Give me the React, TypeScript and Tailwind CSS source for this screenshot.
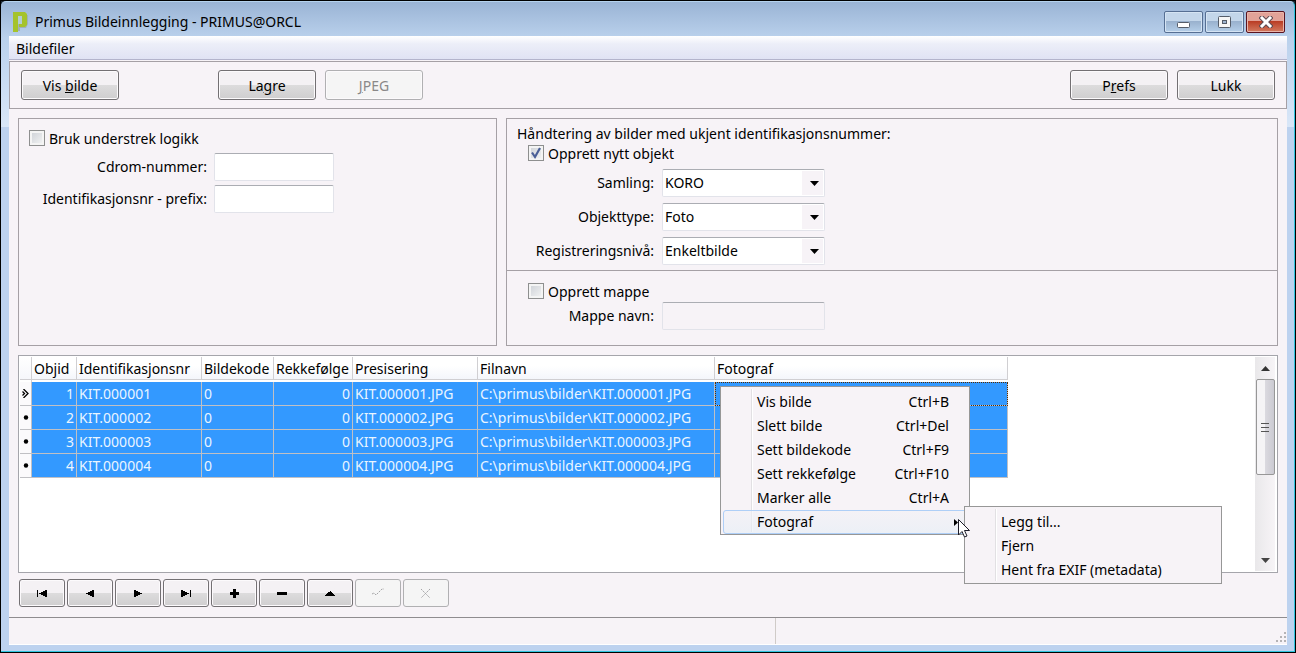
import { useId, type ReactNode } from 'react';

const rows = [1, 2, 3, 4].map((id) => ({
  id,
  ident: `KIT.00000${id}`,
  kode: 0,
  orden: 0,
  fil: `KIT.00000${id}.JPG`,
}));

const columns = [
  { label: 'Objid', width: 'w-[45px]' },
  { label: 'Identifikasjonsnr', width: 'w-[125px]' },
  { label: 'Bildekode', width: 'w-[72px]' },
  { label: 'Rekkefølge', width: 'w-[79px]' },
  { label: 'Presisering', width: 'w-[125px]' },
  { label: 'Filnavn', width: 'w-[237px]' },
  { label: 'Fotograf', width: 'w-[293px]' },
];

const menuItems = [
  { label: 'Vis bilde', keys: 'Ctrl+B' },
  { label: 'Slett bilde', keys: 'Ctrl+Del' },
  { label: 'Sett bildekode', keys: 'Ctrl+F9' },
  { label: 'Sett rekkefølge', keys: 'Ctrl+F10' },
  { label: 'Marker alle', keys: 'Ctrl+A' },
];

const subItems = ['Legg til...', 'Fjern', 'Hent fra EXIF (metadata)'];

const navButtons = [
  { label: 'Første', path: 'M1 1h1v7H1zM11 1v7H9V7H7V6H5V5H3V4h2V3h2V2h2V1z' },
  { label: 'Forrige', path: 'M10 1v7H8V7H6V6H4V5H2V4h2V3h2V2h2V1z' },
  { label: 'Neste', path: 'M2 1v7h2V7h2V6h2V5h2V4H8V3H6V2H4V1z' },
  { label: 'Siste', path: 'M1 1v7h2V7h2V6h2V5h2V4H7V3H5V2H3V1zM10 1h1v7h-1z' },
  { label: 'Ny', path: 'M5 0h3v3h3v3H8v3H5V6H2V3h3z' },
  { label: 'Slett', path: 'M1 3h10v3H1z' },
  { label: 'Rediger', path: 'M6 2h1v1h1v1h1v1h1v1h1v1H1V6h1V5h1V4h1V3h2z' },
];

function Button({ children, disabled = false }: { children: ReactNode; disabled?: boolean }) {
  return (
    <button
      disabled={disabled}
      className="h-[30px] w-[98px] rounded-[3px] border border-[#737073] bg-linear-to-b from-[#f4f1f4] from-50% via-[#dddcdd] via-50% to-[#cfcecf] pt-[2px] shadow-[inset_0_0_0_1px_#fcfafc] disabled:border-[#b0b0b2] disabled:bg-none disabled:bg-[#f5f5f5] disabled:text-[#8a8888]"
    >
      {children}
    </button>
  );
}

function Checkbox({ label, checked = false }: { label: string; checked?: boolean }) {
  return (
    <label className="flex h-5 gap-1">
      <span className="relative mt-px block size-4">
        <input
          type="checkbox"
          defaultChecked={checked}
          className="peer block size-4 appearance-none border border-[#8e8f8f] bg-linear-to-br from-[#cbcfd5] to-[#f6f6f6] shadow-[inset_0_0_0_2px_#f4f4f4]"
        />
        <svg viewBox="0 0 16 16" className="pointer-events-none absolute inset-0 hidden size-4 peer-checked:block">
          <path d="M4 7.500l3 4.500 5-9" fill="none" stroke="#4a5f97" strokeWidth="2.200" />
        </svg>
      </span>
      {label}
    </label>
  );
}

function TextField({ label, wide = false, disabled = false }: { label: string; wide?: boolean; disabled?: boolean }) {
  const id = useId();
  return (
    <div className={`flex h-7 items-center ${wide ? 'gap-2' : 'gap-[7px]'}`}>
      <label htmlFor={id} className={wide ? 'w-[137px] text-right' : 'w-[178px] text-right'}>{label}</label>
      <input
        id={id}
        disabled={disabled}
        className={`${wide ? 'w-[163px]' : 'w-[120px]'} h-7 rounded-xs border border-[#e2e3ea] border-t-[#abadb3] bg-white px-1 disabled:bg-[#f7f3f7]`}
      />
    </div>
  );
}

function SelectField({ label, value }: { label: string; value: string }) {
  const id = useId();
  return (
    <div className="flex h-7 items-center gap-2">
      <label htmlFor={id} className="w-[137px] text-right">{label}</label>
      <div className="relative">
        <select
          id={id}
          defaultValue={value}
          className="block h-7 w-[163px] appearance-none rounded-xs border border-[#e2e3ea] border-t-[#abadb3] bg-white pl-[2px]"
        >
          <option>{value}</option>
        </select>
        <span className="pointer-events-none absolute inset-y-[2px] right-[2px] flex w-[21px] items-center justify-end bg-[#f7f3f7] pr-1">
          <svg viewBox="0 0 9 5" className="h-[5px] w-[9px]">
            <path d="M0 0h9L4.500 5z" />
          </svg>
        </span>
      </div>
    </div>
  );
}

function TitleBar() {
  return (
    <header className="flex h-[34px] items-start justify-between pr-[2px] pl-1">
      <div className="flex h-full items-center gap-[7px] pt-[6px]">
        <svg viewBox="0 0 15 20" className="h-5 w-[15px]">
          <path d="M6 3h9v9l-2 4H7v3H3z" fill="#9fb0b8" />
          <path d="M0 0h12l2 2v11l-2 2H6v-3h3V4H5v16H0z" fill="#a5c32b" />
          <path d="M5 4h4v8H5z" fill="#b4cdd0" />
        </svg>
        <h1>Primus Bildeinnlegging - PRIMUS@ORCL</h1>
      </div>
      <div className="mt-[9px] flex gap-[2px]">
        <button aria-label="Minimer" className="flex h-[22px] w-[39px] items-center justify-center rounded-xs border border-[#566f93] bg-linear-to-b from-[#c3d6ea] from-45% via-[#98b0cd] via-45% to-[#b5cfe9] shadow-[inset_0_0_0_1px_#d5e4f3]">
          <svg viewBox="0 0 13 14" className="h-3.5 w-[13px]">
            <rect x=".5" y="7.500" width="12" height="5" rx="1" fill="#fff" stroke="#555d69" />
          </svg>
        </button>
        <button aria-label="Maksimer" className="flex h-[22px] w-[39px] items-center justify-center rounded-xs border border-[#566f93] bg-linear-to-b from-[#c3d6ea] from-45% via-[#98b0cd] via-45% to-[#b5cfe9] shadow-[inset_0_0_0_1px_#d5e4f3]">
          <svg viewBox="0 0 13 12" className="h-3 w-[13px]">
            <rect x=".5" y=".5" width="12" height="11" rx="1" fill="#f6f6f6" stroke="#555d69" />
            <rect x="4.500" y="4.500" width="4" height="3" fill="#9db4d0" stroke="#555d69" />
          </svg>
        </button>
        <button aria-label="Lukk vindu" className="flex h-[22px] w-[39px] items-center justify-center rounded-xs border border-[#5a1420] bg-linear-to-b from-[#e2a298] from-45% via-[#b93a22] via-45% to-[#d27a60] shadow-[inset_0_0_0_1px_#e9b5aa]">
          <svg viewBox="0 0 14 12" className="h-3 w-3.5">
            <path d="M3 2l8 8M11 2l-8 8" stroke="#5b4a52" strokeWidth="5" strokeLinecap="square" />
            <path d="M3 2l8 8M11 2l-8 8" stroke="#fff" strokeWidth="3" strokeLinecap="square" />
          </svg>
        </button>
      </div>
    </header>
  );
}

function ContextMenu() {
  return (
    <div role="menu" className="absolute top-1 left-[5px] z-10 w-[250px] border border-[#979797] bg-[#f7f3f7] px-[2px] pt-[3px] text-left text-black">
      <span className="pointer-events-none absolute inset-y-[2px] left-[30px] w-[2px] border-l border-[#e2e0e3] bg-white" />
      {menuItems.map((item) => (
        <button key={item.label} role="menuitem" className="relative flex h-6 w-full items-center justify-between pr-[18px] pl-[34px]">
          <span>{item.label}</span>
          <span>{item.keys}</span>
        </button>
      ))}
      <div className="relative">
        <button role="menuitem" aria-haspopup="menu" className="flex h-6 w-full items-center justify-between rounded-[3px] border border-[#aecff7] bg-linear-to-b from-[#f2f1f6]/60 to-[#e5eef6]/60 pr-2 pl-[33px]">
          Fotograf
          <svg viewBox="0 0 4 7" className="h-[7px] w-1">
            <path d="M0 0l4 3.500L0 7z" />
          </svg>
        </button>
        <div role="menu" className="absolute -top-1 left-[241px] w-[258px] border border-[#979797] bg-[#f7f3f7] px-[2px] pt-[3px] pb-px">
          <span className="pointer-events-none absolute inset-y-[2px] left-[30px] w-[2px] border-l border-[#e2e0e3] bg-white" />
          {subItems.map((label) => (
            <button key={label} role="menuitem" className="relative flex h-6 w-full items-center pl-[34px]">{label}</button>
          ))}
        </div>
        <svg viewBox="0 0 12 19" className="pointer-events-none absolute top-[9px] left-[235px] h-[19px] w-3">
          <path d="M.5.5v15.500l3.500-3.500 2.500 5.500 2.500-1-2.500-5.500h5z" fill="#fff" stroke="#1c1c28" />
        </svg>
      </div>
    </div>
  );
}

function ImageTable() {
  return (
    <table className="w-[988px] shrink-0 table-fixed border-separate border-spacing-0 self-start">
      <thead>
        <tr>
          <th aria-label="Markør" className="h-[23px] w-3 border-r border-b border-[#d0cfd2] bg-linear-to-b from-white to-[#f6f7fb]" />
          {columns.map((col) => (
            <th key={col.label} className={`${col.width} h-[23px] border-r border-b border-[#d0cfd2] bg-linear-to-b from-white from-40% to-[#f4f6fb] px-[2px] pt-[2px] text-left font-normal whitespace-nowrap`}>
              {col.label}
            </th>
          ))}
        </tr>
        <tr aria-hidden="true"><td className="h-[2px] border-r border-[#d0cfd2]" /></tr>
      </thead>
      <tbody className="text-[#eaf5ff]">
        {rows.map((row, i) => (
          <tr key={row.id} className="[&>td]:h-6 [&>td]:border-r [&>td]:border-b [&>td]:border-[#c0c0c4] [&>td]:px-[2px]">
            <td className="bg-[#fbfafc]">
              <svg viewBox="0 0 7 9" className="h-[9px] w-[7px]">
                {i === 0 ? <path d="M1.500 0l4.500 4.500L1.500 9M.5 2.500L2.500 4.500L.5 6.500" fill="none" stroke="#000" strokeWidth="1.300" /> : <circle cx="4" cy="4.500" r="2.200" />}
              </svg>
            </td>
            <td className="bg-[#3399ff] text-right">{row.id}</td>
            <td className="bg-[#3399ff]">{row.ident}</td>
            <td className="bg-[#3399ff]">{row.kode}</td>
            <td className="bg-[#3399ff] text-right">{row.orden}</td>
            <td className="bg-[#3399ff]">{row.fil}</td>
            <td className="bg-[#3399ff]">C:\primus\bilder\{row.fil}</td>
            <td className={i === 0 ? 'relative bg-[#3399ff] outline-1 -outline-offset-1 outline-dotted outline-[#5a2d00]' : 'bg-[#3399ff]'}>
              {i === 0 && <ContextMenu />}
            </td>
          </tr>
        ))}
      </tbody>
    </table>
  );
}

function ScrollBar() {
  return (
    <div className="mr-px flex w-5 flex-col items-center bg-linear-to-r from-[#e9e8ea] to-[#f7f4f7]">
      <button aria-label="Rull opp" className="flex h-[22px] w-full items-center justify-center">
        <svg viewBox="0 0 9 5" className="h-[5px] w-[9px]"><path d="M0 5h9L4.500 0z" fill="#333" /></svg>
      </button>
      <div className="flex h-24 w-[19px] flex-col items-center justify-center gap-[3px] rounded-xs border border-[#979797] bg-linear-to-r from-[#f5f4f6] from-45% via-[#dad9df] via-50% to-[#cbcad2]">
        <span className="h-px w-2 bg-[#555]" />
        <span className="h-px w-2 bg-[#555]" />
        <span className="h-px w-2 bg-[#555]" />
      </div>
      <button aria-label="Rull ned" className="mt-auto flex h-[22px] w-full items-center justify-center">
        <svg viewBox="0 0 9 5" className="h-[5px] w-[9px]"><path d="M0 0h9L4.500 5z" fill="#444" /></svg>
      </button>
    </div>
  );
}

function Navigator() {
  const base = 'flex h-7 w-[46px] items-center justify-center rounded-[3px] border';
  return (
    <div className="flex gap-[2px] pt-[6px] pl-px">
      {navButtons.map((b) => (
        <button key={b.label} aria-label={b.label} className={`${base} border-[#737073] bg-linear-to-b from-[#f4f1f4] from-50% via-[#dddcdd] via-50% to-[#cfcecf] shadow-[inset_0_0_0_1px_#fcfafc]`}>
          <svg viewBox="0 0 12 9" className="h-[9px] w-3"><path d={b.path} /></svg>
        </button>
      ))}
      <button disabled aria-label="Lagre post" className={`${base} border-[#b0b0b2] bg-[#f5f5f5]`}>
        <svg viewBox="0 0 14 10" className="h-2.5 w-3.5"><path d="M1 6l2-1 2 2 6-6h2" fill="none" stroke="#a5a5a7" strokeDasharray="2 1" /></svg>
      </button>
      <button disabled aria-label="Avbryt" className={`${base} border-[#b0b0b2] bg-[#f5f5f5]`}>
        <svg viewBox="0 0 12 11" className="h-[11px] w-3"><path d="M1 1l9 9M10 1l-9 9" fill="none" stroke="#a5a5a7" strokeDasharray="2 1" /></svg>
      </button>
    </div>
  );
}

export default function App() {
  return (
    <div className="flex min-h-screen flex-col border border-black bg-[#1d2733] font-['Noto_Sans',sans-serif] text-sm leading-5 text-black">
      <div className="flex grow flex-col rounded-t-[5px] border-t border-r border-b border-t-[#b5d3ee] border-r-[#2fc4de] border-b-[#2fc4de] bg-[linear-gradient(#9ab4d5,#bad1ec_36px,#d9e7f8_125px,#bdd2ef_125px)] px-2 pr-[7px] pb-[6px]">
        <TitleBar />
        <div className="flex grow flex-col border-b border-white bg-[#f7f3f7]">
          <nav className="flex h-6 items-center border-b border-[#b3b4cc] bg-linear-to-b from-white via-[#eceef8] via-35% to-[#e0e3f4] px-[7px] pt-[2px]">
            <button>Bildefiler</button>
          </nav>
          <div className="mt-px flex h-12 items-center border border-[#a5a0a5] px-[11px]">
            <Button>Vis <u>b</u>ilde</Button>
            <div className="ml-[99px] flex gap-[9px]">
              <Button>La<u>g</u>re</Button>
              <Button disabled><u>J</u>PEG</Button>
            </div>
            <div className="ml-auto flex gap-[9px]">
              <Button>P<u>r</u>efs</Button>
              <Button>Lukk</Button>
            </div>
          </div>

          <main className="flex grow flex-col px-[9px] pt-[9px] pb-[10px]">
            <div className="flex gap-[9px]">
              <section className="flex w-[479px] shrink-0 flex-col gap-1 border border-[#a5a0a5] px-[10px] pt-[10px]">
                <Checkbox label="Bruk understrek logikk" />
                <TextField label="Cdrom-nummer:" />
                <TextField label="Identifikasjonsnr - prefix:" />
              </section>
              <section className="grow border border-[#a5a0a5]">
                <div className="h-[152px] border-b border-[#a5a0a5] px-[10px] pt-[5px]">
                  <h2>Håndtering av bilder med ukjent identifikasjonsnummer:</h2>
                  <div className="pl-[11px]">
                    <Checkbox label="Opprett nytt objekt" checked />
                  </div>
                  <div className="mt-[5px] flex flex-col gap-[6px]">
                    <SelectField label="Samling:" value="KORO" />
                    <SelectField label="Objekttype:" value="Foto" />
                    <SelectField label="Registreringsnivå:" value="Enkeltbilde" />
                  </div>
                </div>
                <div className="h-[74px] px-[10px] pt-[11px]">
                  <div className="pl-[11px]">
                    <Checkbox label="Opprett mappe" />
                  </div>
                  <TextField label="Mappe navn:" wide disabled />
                </div>
              </section>
            </div>

            <div className="mt-[9px] flex grow justify-between border border-[#a5a5ab] bg-white p-px">
              <ImageTable />
              <ScrollBar />
            </div>
            <Navigator />
          </main>

          <footer className="flex h-[27px] border-t border-[#8f8c8f]">
            <div className="w-[60%] border-r border-[#d0cbc8]" />
            <div className="flex grow items-end justify-end">
              <svg viewBox="0 0 12 12" className="size-3" fill="#b5b3b5">
                <path d="M9 0h2v2H9zM5 4h2v2H5zM9 4h2v2H9zM1 8h2v2H1zM5 8h2v2H5zM9 8h2v2H9z" />
              </svg>
            </div>
          </footer>
        </div>
      </div>
    </div>
  );
}
